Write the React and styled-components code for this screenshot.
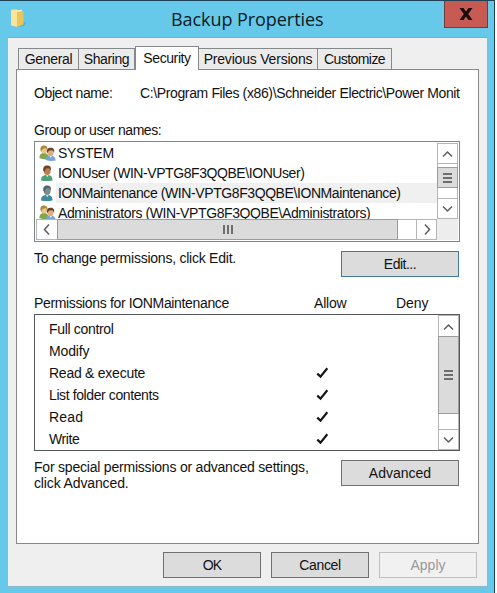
import React from "react";
import styled, { createGlobalStyle } from "styled-components";

const GlobalStyle = createGlobalStyle`
  * { box-sizing: border-box; }
  body { margin: 0; background: #fff; overflow: hidden; }
`;

const Dialog = styled.div`
  width: 495px;
  height: 593px;
  display: flex;
  flex-direction: column;
  background: #66c9ea;
  border-top: 1px solid #1d4258;
  border-right: 1px solid #1d4258;
  padding: 0 7px 6px 8px;
  font-family: "Liberation Sans", Arial, sans-serif;
  font-size: 14px;
  line-height: 16px;
  color: #111;
`;

const TitleBar = styled.header`
  height: 36px;
  flex: none;
  display: grid;
  grid-template-columns: 36px 1fr 43px;
`;

const FolderIcon = styled.svg`
  width: 18px;
  height: 20px;
  margin: 7px 0 0 1px;
`;

const Title = styled.h1`
  margin: 4px 0 0;
  font: 400 18px/28px "Open Sans", "Noto Sans", sans-serif;
  letter-spacing: ${(p) => p.$ls}px;
  padding-left: 127px;
  white-space: nowrap;
  color: #0c1a22;
`;

const CloseButton = styled.button`
  width: 44px;
  height: 27px;
  padding: 0;
  display: grid;
  place-items: center;
  background: #c75b53;
  border: 1px solid #713c40;
  border-top: 0;
`;

const Client = styled.main`
  flex: 1;
  min-height: 0;
  display: flex;
  flex-direction: column;
  background: #efeff0;
  border-top: 1px solid #78aec4;
  border-bottom: 1px solid #8fb6c6;
  width: 479px;
  padding: 7px 8px 0;
`;

const Tabs = styled.nav`
  display: flex;
  align-items: flex-end;
  height: 24px;
  padding-left: 2px;
`;

const Tab = styled.button`
  width: ${(p) => p.$w}px;
  height: ${(p) => (p.$active ? 24 : 21)}px;
  margin-bottom: ${(p) => (p.$active ? -1 : 0)}px;
  padding: 0 0 ${(p) => (p.$active ? 2 : 0)}px;
  display: flex;
  align-items: center;
  justify-content: center;
  font: inherit;
  color: inherit;
  white-space: nowrap;
  background: ${(p) => (p.$active ? "#fff" : "#ebebeb")};
  border: 1px solid #85898c;
  border-bottom: 0;
  border-left-width: ${(p) => (p.$joined ? 0 : 1)}px;
  z-index: 1;
`;

const Panel = styled.section`
  width: 463px;
  height: 475px;
  background: #fff;
  border: 1px solid #85898c;
  padding: 15px 17px 0;
  display: flex;
  flex-direction: column;
`;

const Text = styled.span`
  letter-spacing: ${(p) => p.$ls || 0}px;
  white-space: nowrap;
`;

const ObjectRow = styled.div`
  display: grid;
  grid-template-columns: 106px 1fr;
  height: 37px;
`;

const Label = styled.div`
  height: ${(p) => p.$h}px;
  flex: none;
`;

const UserBox = styled.div`
  width: 426px;
  height: 101px;
  flex: none;
  border: 1px solid #7e868d;
  padding: 1px;
  display: grid;
  grid-template-columns: 401px 21px;
  grid-template-rows: 76px 21px;
`;

const UserList = styled.div`
  overflow: hidden;
  padding-left: 3px;
`;

const UserRow = styled.div`
  height: 20px;
  display: grid;
  grid-template-columns: 17px 1fr;
  align-items: center;
`;

const UserName = styled.div`
  height: 20px;
  line-height: 20px;
  padding-left: 2px;
  background: ${(p) => (p.$selected ? "#f0f0f0" : "transparent")};
`;

const ScrollBar = styled.div`
  display: flex;
  flex-direction: ${(p) => (p.$horizontal ? "row" : "column")};
  background: #fff;
  border: 1px solid #b5b5b5;
  min-width: 0;
  min-height: 0;
`;

const ScrollButton = styled.button`
  flex: 0 0 ${(p) => p.$size || 20}px;
  padding: 0;
  display: grid;
  place-items: center;
  background: #fff;
  border: 0 solid #b5b5b5;
  border-width: ${(p) => p.$edge};
`;

const Gap = styled.div`
  flex: 0 0 ${(p) => p.$size}px;
`;

const Thumb = styled.div`
  flex: 0 0 ${(p) => p.$size}px;
  margin: ${(p) => (p.$horizontal ? "-1px 0" : "0 -1px")};
  display: grid;
  place-items: center;
  background: #dbdbdb;
  border: 1px solid #9c9c9c;
`;

const Grip = styled.div`
  width: ${(p) => (p.$horizontal ? 10 : 9)}px;
  height: ${(p) => (p.$horizontal ? 9 : 10)}px;
  display: flex;
  flex-direction: ${(p) => (p.$horizontal ? "row" : "column")};
  justify-content: space-between;
`;

const GripLine = styled.i`
  flex: 0 0 2px;
  background: #6d6d6d;
`;

const Corner = styled.div`
  background: #ededed;
`;

const ActionRow = styled.div`
  display: flex;
  justify-content: space-between;
  align-items: flex-start;
  padding: ${(p) => p.$top}px 2px 0 0;
  height: ${(p) => p.$h}px;
`;

const Message = styled.p`
  margin: ${(p) => p.$top}px 0 0;
  display: flex;
  flex-direction: column;
`;

const Button = styled.button`
  width: ${(p) => p.$w || 98}px;
  height: 26px;
  padding: 0;
  font: inherit;
  line-height: 24px;
  color: ${(p) => (p.disabled ? "#999" : "#111")};
  background: ${(p) => (p.disabled ? "#f1f1f1" : "#dcdcdc")};
  border: 1px solid ${(p) => (p.disabled ? "#bfbfbf" : p.$focus ? "#43799b" : "#707070")};
`;

const PermissionHead = styled.div`
  display: grid;
  grid-template-columns: 280px 82px 1fr;
  height: 19px;
  flex: none;
`;

const PermissionBox = styled.div`
  width: 426px;
  height: 137px;
  flex: none;
  display: grid;
  grid-template-columns: 1fr 21px;
  border: 1px solid #55595b;
`;

const PermissionList = styled.div`
  padding: 3px 0 0 14px;
`;

const PermissionRow = styled.div`
  height: 22px;
  line-height: 22px;
  display: grid;
  grid-template-columns: 266px 20px;
  align-items: center;
`;

const Footer = styled.footer`
  display: flex;
  justify-content: flex-end;
  gap: 10px;
  padding: 8px 2px 0 0;
`;

function Chevron({ dir }) {
  const d = {
    up: "M1 9.5 5.5 5 10 9.5",
    down: "M1 4.5 5.5 9 10 4.5",
    left: "M8 1.5 3.5 6.5 8 11.5",
    right: "M4 1.5 8.5 6.5 4 11.5",
  }[dir];
  return (
    <svg width="12" height="13" viewBox="0 0 12 13">
      <path d={d} fill="none" stroke="#5d5d5d" strokeWidth="1.5" />
    </svg>
  );
}

function Bars({ horizontal }) {
  return (
    <Grip $horizontal={horizontal}>
      <GripLine />
      <GripLine />
      <GripLine />
    </Grip>
  );
}

function UserIcon({ body, hair, skin }) {
  return (
    <svg width="16" height="18" viewBox="0 0 16 18">
      <path d="M2 16.500C2 12.500 4 11 8 11s5.500 1.500 5.500 5.500q-6 1-11.500 0z" fill={body} />
      <path d="M7 11 8.200 13.200 9.600 11z" fill="#dfe9e4" />
      <ellipse cx="8.200" cy="6.500" rx="3.400" ry="4.500" fill={skin} />
      <path d="M4.300 7C3.600 2.500 6 1 9 1.500c3 .4 3.500 3 2.600 5.500-.3-2-1-2.700-2.500-2.700S6.300 4.500 5.800 8z" fill={hair} />
    </svg>
  );
}

function GroupIcon() {
  return (
    <svg width="17" height="18" viewBox="0 0 17 18">
      <path d="M.3 14C.5 10.500 2 9 5 9s5 2 5 6q-5 1-9.700-1z" fill="#7fa84b" />
      <ellipse cx="5" cy="6" rx="3" ry="3.600" fill="#edc590" />
      <path d="M1.400 6C1 2.500 3 1.200 5.300 1.500c2.700.2 3.600 2 2.900 4.500-.8-2-2.200-2-3.400-1.500S2.500 6 2.300 8z" fill="#a98a39" />
      <path d="M6.500 16c.2-3 2-4.500 5-4.500s5 1.500 5.200 5q-5 1.200-10.200-.5z" fill="#76a5d9" />
      <path d="m10 11 1.800 3 1.700-3z" fill="#eef5fa" />
      <ellipse cx="11.500" cy="8.500" rx="3" ry="3.800" fill="#dfae7d" />
      <path d="M8 8.500C7.500 5 9 3.800 11.800 3.800c2.700 0 4 2 3.200 5-.7-2-1.500-2.700-2.700-2.600S9 6.500 8.800 9z" fill="#65452c" />
    </svg>
  );
}

function Check() {
  return (
    <svg width="14" height="14" viewBox="0 0 14 14">
      <path d="M2.300 7.600 5.500 10.600 12.300 2.200" fill="none" stroke="#161616" strokeWidth="2.200" />
    </svg>
  );
}

const green = { body: "#4da077", hair: "#704428", skin: "#bd7c50" };
const teal = { body: "#3e8c9d", hair: "#56656d", skin: "#7d8c91" };

const tabs = [
  { name: "General", w: 61, ls: -0.33 },
  { name: "Sharing", w: 56, ls: -0.4, joined: true },
  { name: "Security", w: 64, ls: -0.4, active: true },
  { name: "Previous Versions", w: 119, ls: -0.2, joined: true },
  { name: "Customize", w: 74, ls: -0.55, joined: true },
];

const users = [
  { name: "SYSTEM", ls: -0.3, group: true },
  { name: "IONUser (WIN-VPTG8F3QQBE\\IONUser)", ls: -0.43, look: green },
  { name: "IONMaintenance (WIN-VPTG8F3QQBE\\IONMaintenance)", ls: -0.41, look: teal, selected: true },
  { name: "Administrators (WIN-VPTG8F3QQBE\\Administrators)", ls: -0.39, group: true },
];

const permissions = [
  { name: "Full control", ls: -0.33 },
  { name: "Modify", ls: -0.15 },
  { name: "Read & execute", ls: -0.25, allow: true },
  { name: "List folder contents", ls: -0.4, allow: true },
  { name: "Read", ls: 0.2, allow: true },
  { name: "Write", ls: -0.4, allow: true },
];

export default function App() {
  return (
    <>
      <GlobalStyle />
      <Dialog>
        <TitleBar>
          <FolderIcon viewBox="0 0 18 20">
            <path d="M12 15 17 14 15 18 6 19z" fill="#4c91a5" opacity=".55" />
            <path d="M2 2 8 1v16l-6 .5z" fill="#f3d272" />
            <path d="M5 2.500 13 1.800V17l-8 .8z" fill="#fbeeb4" />
            <path d="M8 4 14.500 3v13.500L8 19z" fill="#eac557" />
            <path d="M2 2 5 1.500 8 4v15l-6-1.800z" fill="#fbe49a" />
          </FolderIcon>
          <Title $ls={-0.06}>Backup Properties</Title>
          <CloseButton aria-label="Close">
            <svg width="14" height="12" viewBox="0 0 14 12">
              <path d="M.5 0h4L7 3.500 9.500 0h4L9.200 6l4.300 6h-4L7 8.500 4.500 12h-4L4.800 6z" fill="#1b0d0d" />
            </svg>
          </CloseButton>
        </TitleBar>
        <Client>
          <Tabs>
            {tabs.map((t) => (
              <Tab key={t.name} $w={t.w} $active={t.active} $joined={t.joined}>
                <Text $ls={t.ls}>{t.name}</Text>
              </Tab>
            ))}
          </Tabs>
          <Panel>
            <ObjectRow>
              <Text $ls={-0.4}>Object name:</Text>
              <Text $ls={-0.37}>C:\Program Files (x86)\Schneider Electric\Power Monit</Text>
            </ObjectRow>
            <Label $h={19}>
              <Text $ls={-0.45}>Group or user names:</Text>
            </Label>
            <UserBox>
              <UserList>
                {users.map((u) => (
                  <UserRow key={u.name}>
                    {u.group ? <GroupIcon /> : <UserIcon {...u.look} />}
                    <UserName $selected={u.selected}>
                      <Text $ls={u.ls}>{u.name}</Text>
                    </UserName>
                  </UserRow>
                ))}
              </UserList>
              <ScrollBar>
                <ScrollButton $edge="0 0 1px"><Chevron dir="up" /></ScrollButton>
                <Gap $size={3} />
                <Thumb $size={21}><Bars /></Thumb>
                <Gap $size={10} />
                <ScrollButton $edge="1px 0 0"><Chevron dir="down" /></ScrollButton>
              </ScrollBar>
              <ScrollBar $horizontal>
                <ScrollButton $edge="0"><Chevron dir="left" /></ScrollButton>
                <Thumb $horizontal $size={341}><Bars horizontal /></Thumb>
                <Gap $size={18} />
                <ScrollButton $edge="0 0 0 1px"><Chevron dir="right" /></ScrollButton>
              </ScrollBar>
              <Corner />
            </UserBox>
            <ActionRow $top={9} $h={53}>
              <Message $top={-1}>
                <Text $ls={-0.24}>To change permissions, click Edit.</Text>
              </Message>
              <Button $w={118} $focus><Text $ls={-0.5}>Edit...</Text></Button>
            </ActionRow>
            <PermissionHead>
              <Text $ls={-0.35}>Permissions for IONMaintenance</Text>
              <Text $ls={-0.2}>Allow</Text>
              <Text $ls={-0.1}>Deny</Text>
            </PermissionHead>
            <PermissionBox>
              <PermissionList>
                {permissions.map((p) => (
                  <PermissionRow key={p.name}>
                    <Text $ls={p.ls}>{p.name}</Text>
                    {p.allow && <Check />}
                  </PermissionRow>
                ))}
              </PermissionList>
              <ScrollBar>
                <ScrollButton $edge="0"><Chevron dir="up" /></ScrollButton>
                <Thumb $size={78}><Bars /></Thumb>
                <Gap $size={15} />
                <ScrollButton $edge="1px 0 0"><Chevron dir="down" /></ScrollButton>
              </ScrollBar>
            </PermissionBox>
            <ActionRow $top={9} $h={60}>
              <Message $top={-1}>
                <Text $ls={-0.21}>For special permissions or advanced settings,</Text>
                <Text $ls={-0.13}>click Advanced.</Text>
              </Message>
              <Button $w={118}><Text>Advanced</Text></Button>
            </ActionRow>
          </Panel>
          <Footer>
            <Button><Text $ls={-0.8}>OK</Text></Button>
            <Button><Text $ls={-0.35}>Cancel</Text></Button>
            <Button disabled><Text>Apply</Text></Button>
          </Footer>
        </Client>
      </Dialog>
    </>
  );
}
